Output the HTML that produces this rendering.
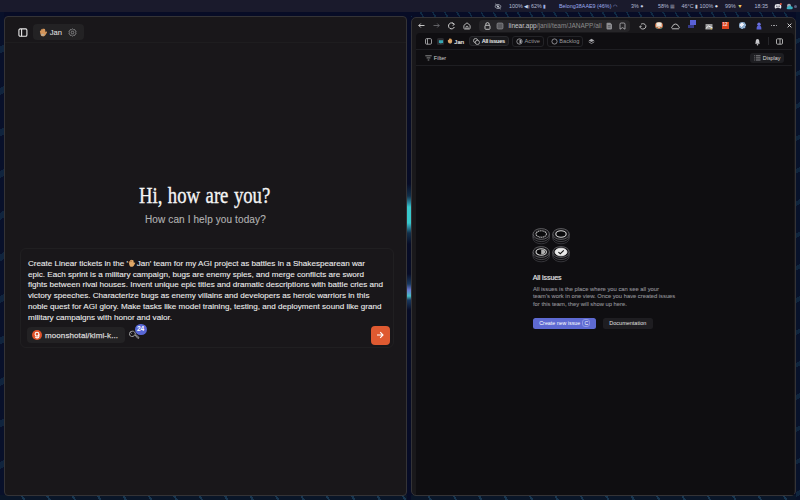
<!DOCTYPE html>
<html><head><meta charset="utf-8">
<style>
*{box-sizing:border-box;margin:0;padding:0}
html,body{width:800px;height:500px;overflow:hidden;background:#070c26;font-family:"Liberation Sans",sans-serif;position:relative}
.a{position:absolute}
.t{position:absolute;white-space:nowrap;line-height:1}
#topbar{left:0;top:0;width:800px;height:12px;background:#1a1a2c}
#winL{left:4px;top:16px;width:403px;height:480px;background:#19171a;border:1px solid #343336;border-radius:4px}
#winR{left:411px;top:17px;width:385px;height:479px;background:#19181b;border:1px solid #343336;border-radius:5px}
#app{left:416px;top:33px;width:378px;height:462px;background:#0f0e11;border-radius:4px 4px 0 0}
.sb{color:#b4bad6;font-size:5.4px}
</style></head>
<body>
<!-- WALLPAPER -->
<div class="a" style="left:400px;top:12px;width:400px;height:5px;background:repeating-linear-gradient(60deg,transparent 0 9px,#0f2a44 9px 10.5px)"></div>
<div class="a" style="left:0;top:12px;width:4px;height:488px;background:repeating-linear-gradient(150deg,#08102a 0 30px,#10243e 30px 36px)"></div>
<div class="a" style="left:0;top:495px;width:800px;height:5px;background:repeating-linear-gradient(60deg,#0a1628 0 20px,#183650 20px 22px)"></div>
<div class="a" style="left:407px;top:12px;width:4px;height:488px;background:linear-gradient(180deg,#070c26 0,#070c26 172px,#12304a 184px,#2a8aa0 191px,#38c8cc 195px,#38c8cc 211px,#2a8aa0 215px,#12304a 221px,#070c26 232px,#070c26 262px,#1a3a60 272px,#6a78d0 278px,#48c0c8 284px,#1a3a60 288px,#070c26 298px,#070c26 100%)"></div>
<div class="a" style="left:796px;top:12px;width:4px;height:488px;background:repeating-linear-gradient(150deg,#08122a 0 24px,#10263e 24px 28px)"></div>
<div class="a" id="topbar"></div>
<div class="a" id="winL"></div>
<div class="a" id="winR"></div>
<div class="a" id="app"></div>

<!-- TOPBAR -->
<svg class="a" style="left:494px;top:2.5px" width="8" height="7" viewBox="0 0 8 7"><path d="M0.8 3.5 Q4 -0.5 7.2 3.5 Q4 7.5 0.8 3.5Z" fill="none" stroke="#b8bcc8" stroke-width="0.8"/><circle cx="4" cy="3.5" r="1.1" fill="#b8bcc8"/><path d="M1.2 0.8 L6.8 6.2" stroke="#b8bcc8" stroke-width="0.8"/></svg>
<div class="t sb" style="left:509px;top:3.5px">100%<span style="color:#c8d4f0"> ◀ᴉ </span>62% <span style="color:#9fb0e0">▮</span></div>
<div class="t sb" style="left:559px;top:3.5px;color:#9cacee">Belong38AAE9 (46%) <span style="color:#9fb0e0">◠</span></div>
<div class="t sb" style="left:631px;top:3.5px">3% <span style="color:#c0c8e0">●</span></div>
<div class="t sb" style="left:658px;top:3.5px">58% <span style="color:#8a8ea0">▦</span></div>
<div class="t sb" style="left:681.5px;top:3.5px">46°C <span style="color:#c0c4d0">▮</span> 100% <span style="color:#e0e4f0">●</span></div>
<div class="t sb" style="left:725px;top:3.5px">99% <span style="color:#f0d060">▼</span></div>
<div class="t sb" style="left:754.5px;top:3.5px">18:35</div>
<svg class="a" style="left:774px;top:2.8px" width="8" height="6.5" viewBox="0 0 8 6.5"><path d="M1.3 1.5 C2.5 0.8 5.5 0.8 6.7 1.5 C7.5 3 7.5 4.5 7 5.3 C6 5.8 5.5 5.2 5.2 4.8 H2.8 C2.5 5.2 2 5.8 1 5.3 C0.5 4.5 0.5 3 1.3 1.5Z" fill="#e8e8ee"/><circle cx="2.9" cy="3.2" r="0.6" fill="#1b1a2c"/><circle cx="5.1" cy="3.2" r="0.6" fill="#1b1a2c"/><circle cx="6.9" cy="1.1" r="1" fill="#e85a3a"/></svg>
<svg class="a" style="left:785.5px;top:2.5px" width="7" height="7" viewBox="0 0 7 7"><circle cx="3" cy="2.8" r="2" fill="#a8a8b4"/><path d="M1.6 6.2 H5.6 A1.3 1.3 0 0 0 5.4 3.6 A1.9 1.9 0 0 0 1.9 4 A1.1 1.1 0 0 0 1.6 6.2Z" fill="#3ab0c0"/></svg>
<div class="a" style="left:794px;top:4.5px;width:3px;height:3px;border-radius:50%;background:#5a6080"></div>

<!-- LEFT WINDOW -->
<div class="a" style="left:5px;top:42px;width:401px;height:1px;background:#1e1d1f"></div>
<svg class="a" style="left:18px;top:27.5px" width="10" height="9" viewBox="0 0 10 9"><rect x="0.9" y="0.9" width="8" height="7.4" rx="1.3" fill="none" stroke="#e8e8e8" stroke-width="1.1"/><path d="M3.6 0.9 V8.3" stroke="#e8e8e8" stroke-width="1.1"/></svg>
<div class="a" style="left:33px;top:24px;width:50.5px;height:15.5px;background:#232224;border-radius:4px"></div>
<svg class="a" style="left:38.5px;top:27.8px" width="8.5" height="9" viewBox="0 0 8.5 9"><path d="M1.3 5.2 L0.9 3.2 C0.8 2.5 1.6 2.2 1.9 2.9 L2.3 1.4 C2.5 0.7 3.3 0.8 3.4 1.5 L3.7 0.8 C4 0.2 4.8 0.4 4.8 1.1 L5.2 0.9 C5.7 0.7 6.2 1.1 6.1 1.7 L6.6 4.2 L7.4 3.6 C7.9 3.3 8.3 3.9 8 4.4 L6.8 6.6 C6 8.2 4.6 8.6 3.3 8.3 C2 8 1.5 6.8 1.3 5.2Z" fill="#d4955a"/><path d="M2 6.4 C2.8 5.6 4.4 5.6 5.6 6.6 C5 8 3.4 8.4 2.4 7.6Z" fill="#b9ad98"/></svg>
<div class="t" style="left:49.7px;top:28.5px;font-size:7.6px;color:#dcdcdc;-webkit-text-stroke:0.1px #dcdcdc">Jan</div>
<svg class="a" style="left:68px;top:27.7px" width="9" height="9" viewBox="0 0 9 9"><path d="M4.5 0.9 L5.4 1.7 L6.6 1.5 L7 2.6 L8.1 3.3 L7.7 4.5 L8.1 5.7 L7 6.4 L6.6 7.5 L5.4 7.3 L4.5 8.1 L3.6 7.3 L2.4 7.5 L2 6.4 L0.9 5.7 L1.3 4.5 L0.9 3.3 L2 2.6 L2.4 1.5 L3.6 1.7Z" fill="none" stroke="#8a8a8c" stroke-width="0.9" stroke-linejoin="round"/><circle cx="4.5" cy="4.5" r="1.3" fill="none" stroke="#8a8a8c" stroke-width="0.9"/></svg>

<div class="t" id="h1" style="left:139.3px;top:183.6px;font-family:'Liberation Serif',serif;font-size:23.4px;word-spacing:1px;color:#f4f4f4;-webkit-text-stroke:0.35px #f4f4f4;transform:scaleX(0.8);transform-origin:0 0">Hi, how are you?</div>
<div class="t" id="h2" style="left:145px;top:215.1px;font-size:10px;letter-spacing:0.12px;color:#b2b2b2;-webkit-text-stroke:0.12px #b2b2b2">How can I help you today?</div>

<div class="a" style="left:19.5px;top:247.5px;width:374px;height:100px;border:1px solid #201f21;border-radius:6px"></div>
<div class="a" id="prompt" style="left:28px;top:258.8px;width:360px;font-size:8.1px;line-height:10.76px;color:#ececec;-webkit-text-stroke:0.1px #ececec">
<div style="white-space:nowrap">Create Linear tickets in the '<svg style="display:inline-block;vertical-align:-1.6px;margin:0 0.6px 0 0.4px" width="7.6" height="8.6" viewBox="0 0 8.5 9"><path d="M1.3 5.2 L0.9 3.2 C0.8 2.5 1.6 2.2 1.9 2.9 L2.3 1.4 C2.5 0.7 3.3 0.8 3.4 1.5 L3.7 0.8 C4 0.2 4.8 0.4 4.8 1.1 L5.2 0.9 C5.7 0.7 6.2 1.1 6.1 1.7 L6.6 4.2 L7.4 3.6 C7.9 3.3 8.3 3.9 8 4.4 L6.8 6.6 C6 8.2 4.6 8.6 3.3 8.3 C2 8 1.5 6.8 1.3 5.2Z" fill="#e0a868"/><path d="M1.2 4 C1.6 2.2 3.6 1.2 4.2 3" fill="none" stroke="#a86a3a" stroke-width="0.8"/></svg>Jan' team for my AGI project as battles in a Shakespearean war</div>
<div style="white-space:nowrap">epic. Each sprint is a military campaign, bugs are enemy spies, and merge conflicts are sword</div>
<div style="white-space:nowrap">fights between rival houses. Invent unique epic titles and dramatic descriptions with battle cries and</div>
<div style="white-space:nowrap">victory speeches. Characterize bugs as enemy villains and developers as heroic warriors in this</div>
<div style="white-space:nowrap">noble quest for AGI glory. Make tasks like model training, testing, and deployment sound like grand</div>
<div style="white-space:nowrap">military campaigns with honor and valor.</div>
</div>
<div class="a" style="left:27px;top:327.3px;width:97.5px;height:15.5px;background:#232224;border-radius:4px"></div>
<div class="a" style="left:31.6px;top:330.4px;width:10px;height:10px;background:#e0522a;border-radius:50%"></div><svg class="a" style="left:31.6px;top:330.4px" width="10" height="10" viewBox="0 0 10 10"><circle cx="5" cy="4.2" r="1.9" fill="none" stroke="#fff" stroke-width="1.1"/><path d="M6.9 4.2 V6.3 A1.9 1.9 0 0 1 3.3 6.8" fill="none" stroke="#fff" stroke-width="1.1"/></svg>
<div class="t" style="left:45px;top:332px;font-size:8px;letter-spacing:0.1px;color:#d4d4d4;-webkit-text-stroke:0.25px #d4d4d4">moonshotai/kimi-k...</div>
<svg class="a" style="left:129px;top:330px" width="11" height="11" viewBox="0 0 11 11"><path d="M3.4 1.2 A2.7 2.7 0 1 0 5.7 4.7 L8.9 8.4 A0.9 0.9 0 0 0 9.9 7.4 L6.3 4.1 A2.7 2.7 0 0 0 3.4 1.2Z M1.2 2.3 L2.6 3.6" fill="none" stroke="#a0a0a0" stroke-width="1"/></svg>
<div class="a" style="left:135.3px;top:323.8px;width:11.5px;height:11px;background:#5867d6;border-radius:50%"></div>
<div class="t" style="left:136.9px;top:326.3px;font-size:6.6px;font-weight:bold;color:#fff">24</div>
<div class="a" style="left:371px;top:326px;width:18.8px;height:18.8px;background:#df5a31;border-radius:4px"></div>
<svg class="a" style="left:375px;top:330px" width="10" height="10" viewBox="0 0 10 10"><path d="M2 5 H8 M5.2 2.2 L8 5 L5.2 7.8" fill="none" stroke="#fff" stroke-width="1.1"/></svg>

<!-- RIGHT WINDOW -->
<svg class="a" style="left:418px;top:23px" width="7" height="5" viewBox="0 0 7 5"><path d="M0.8 2.5 H6.5 M2.8 0.5 L0.8 2.5 L2.8 4.5" fill="none" stroke="#d8d8d8" stroke-width="0.9"/></svg>
<svg class="a" style="left:433px;top:23px" width="7" height="5" viewBox="0 0 7 5"><path d="M0.5 2.5 H6.2 M4.2 0.5 L6.2 2.5 L4.2 4.5" fill="none" stroke="#6a6a6e" stroke-width="0.9"/></svg>
<svg class="a" style="left:447px;top:22px" width="9" height="8" viewBox="0 0 9 8"><path d="M7 2.2 A3 3 0 1 0 7.3 5" fill="none" stroke="#d0d0d0" stroke-width="1"/><path d="M5.3 0.8 L7.5 2.3 L5.6 3.6" fill="none" stroke="#d0d0d0" stroke-width="0.9"/></svg>
<svg class="a" style="left:462.5px;top:22.3px" width="8" height="7.5" viewBox="0 0 8 7.5"><path d="M0.9 3.4 L4 0.8 L7.1 3.4 V6.3 A0.7 0.7 0 0 1 6.4 7 H1.6 A0.7 0.7 0 0 1 0.9 6.3Z" fill="none" stroke="#d0d0d0" stroke-width="0.85" stroke-linejoin="round"/><path d="M3 7 V5.2 A1 1 0 0 1 5 5.2 V7" fill="none" stroke="#d0d0d0" stroke-width="0.8"/></svg>
<div class="a" style="left:478.8px;top:19.6px;width:151.2px;height:12px;background:#262528;border-radius:4px"></div>
<svg class="a" style="left:484px;top:21.5px" width="7" height="8" viewBox="0 0 7 8"><path d="M1.8 3.3 V2.3 A1.7 1.7 0 0 1 5.2 2.3 V3.3" fill="none" stroke="#cfcfcf" stroke-width="0.9"/><rect x="1" y="3.3" width="5" height="4" rx="0.8" fill="none" stroke="#cfcfcf" stroke-width="0.9"/></svg>
<svg class="a" style="left:496px;top:21.5px" width="8" height="8" viewBox="0 0 8 8"><rect x="1" y="1" width="6" height="6" rx="1.2" fill="#5a5a5e" stroke="#9a9a9e" stroke-width="0.6"/></svg>
<div class="t" style="left:508.5px;top:22.5px;font-size:6.5px;color:#c8c8cc">linear.app<span style="color:#8a8a8a">/janii/team/JANAPP/all</span></div>
<svg class="a" style="left:605.5px;top:21.8px" width="7" height="8" viewBox="0 0 7 8"><path d="M1.3 0.8 H4.3 L6 2.5 V6.6 A0.8 0.8 0 0 1 5.2 7.4 H1.3 A0.8 0.8 0 0 1 0.5 6.6 V1.6 A0.8 0.8 0 0 1 1.3 0.8Z" fill="#8e8e92"/><path d="M1.8 3.6 H4.6 M1.8 5.2 H4.6" stroke="#3a3a3e" stroke-width="0.6"/></svg>
<svg class="a" style="left:618.5px;top:21.8px" width="7" height="8" viewBox="0 0 7 8"><path d="M1 7.2 V2.2 A1.2 1.2 0 0 1 2.2 1 H4.8 A1.2 1.2 0 0 1 6 2.2 V7.2 L3.5 5.6Z" fill="none" stroke="#a8a8ac" stroke-width="0.9"/></svg>

<!-- extension icons -->
<svg class="a" style="left:639px;top:22.5px" width="8" height="7" viewBox="0 0 8 7"><path d="M2 1.2 C3.5 0.2 6.2 0.6 6.8 2.6 C7.4 4.6 5.6 6.2 3.6 6 C1.6 5.8 0.6 4.4 1 3 M1 3 L2.6 3.4" fill="none" stroke="#c8c8c8" stroke-width="0.9"/></svg>
<div class="a" style="left:655px;top:22px;width:7.5px;height:7px;border-radius:50%;background:radial-gradient(circle at 50% 35%,#f0e8e0 0 30%,#d8c0a8 31% 55%,#c86840 56% 70%,#70a080 71%)"></div>
<svg class="a" style="left:670.5px;top:22.5px" width="9" height="7" viewBox="0 0 9 7"><path d="M1.5 5.8 H7.5 A1.4 1.4 0 0 0 7.3 3.2 A2.9 2.9 0 0 0 1.7 3.2 A1.4 1.4 0 0 0 1.5 5.8Z" fill="none" stroke="#cfcfcf" stroke-width="0.9"/></svg>
<div class="a" style="left:689.5px;top:20px;width:6.5px;height:4.8px;background:#5a62d8"></div>
<div class="a" style="left:688px;top:24.5px;width:6px;height:3.5px;background:#353a88"></div>
<svg class="a" style="left:705px;top:22.5px" width="8" height="7" viewBox="0 0 8 7"><rect x="0.5" y="1" width="7" height="5.5" rx="0.6" fill="#9a9a9c"/><path d="M0.8 5.5 L3.5 3 L7.5 4.8" stroke="#f4f4f4" stroke-width="1" fill="none"/><circle cx="6.2" cy="5.8" r="0.7" fill="#f0c040"/></svg>
<div class="a" style="left:722px;top:22px;width:6.5px;height:6.8px;background:#d8431f"></div>
<div class="t" style="left:722.6px;top:23.4px;font-size:4.6px;color:#f8d8d0;font-weight:bold;letter-spacing:-0.2px">12</div>
<div class="a" style="left:738.5px;top:22px;width:7.5px;height:7px;border-radius:50%;background:radial-gradient(circle at 40% 40%,#f0f0f8 0 30%,#90b0d0 31% 65%,#405070 66%)"></div>
<svg class="a" style="left:755.5px;top:21.5px" width="6" height="8" viewBox="0 0 6 8"><circle cx="3" cy="2.2" r="1.7" fill="#6a70e0"/><path d="M0.6 7.4 C0.4 4.5 1.5 3.6 3 3.6 C4.5 3.6 5.6 4.5 5.4 7.4Z" fill="#5b63d8"/></svg>
<div class="a" style="left:771px;top:24.8px;width:6px;height:0.9px;background:repeating-linear-gradient(90deg,#9a9a9e 0 1.2px,transparent 1.2px 2.4px)"></div>
<svg class="a" style="left:786.5px;top:23px" width="5" height="5" viewBox="0 0 5 5"><path d="M0.6 0.6 L4.4 4.4 M4.4 0.6 L0.6 4.4" stroke="#e6e6e6" stroke-width="0.9"/></svg>

<div class="a" style="left:416px;top:49px;width:376px;height:1px;background:#1e1e22"></div>
<div class="a" style="left:416px;top:65px;width:376px;height:1px;background:#1e1e22"></div>

<svg class="a" style="left:424.8px;top:38.4px" width="7" height="7" viewBox="0 0 7 7"><rect x="0.5" y="0.6" width="6" height="5.6" rx="1.2" fill="none" stroke="#b0b0b2" stroke-width="0.85"/><path d="M2.5 0.6 V6.2" stroke="#b0b0b2" stroke-width="0.85"/></svg>
<div class="a" style="left:436.5px;top:37.5px;width:7.5px;height:7.5px;background:#2a2a2e;border-radius:1.5px"></div>
<svg class="a" style="left:437.5px;top:38.5px" width="6" height="6" viewBox="0 0 6 6"><path d="M0.9 1.2 H5.1 V4 H3.6 L2.6 5 V4 H0.9Z" fill="#36a8b4"/></svg>
<svg class="a" style="left:447.3px;top:38.3px" width="6" height="6" viewBox="0 0 8 8"><path d="M1.2 4.5 C0.8 3 1.5 1.8 2.5 2.5 L2.8 1.2 C3.2 0.5 4 0.6 4.2 1.3 L4.6 0.8 C5.2 0.4 5.9 0.8 5.8 1.6 L6.6 2.2 C7.3 3 7 5.5 6 6.6 C5 7.6 2.8 7.6 1.8 6.3Z" fill="#dba060"/><path d="M3 5.2 C3.8 4.6 5 4.8 5.6 5.6" fill="none" stroke="#c8b89a" stroke-width="1.2"/></svg>
<div class="t" style="left:454.3px;top:38.6px;font-size:6px;letter-spacing:0.1px;color:#e0e0e0;-webkit-text-stroke:0.2px #e0e0e0">Jan</div>

<div class="a" style="left:469px;top:36px;width:39.5px;height:10px;background:#19191c;border:0.8px solid #28282c;border-radius:3px"></div>
<svg class="a" style="left:472.5px;top:38px" width="7" height="7" viewBox="0 0 7 7"><circle cx="2.6" cy="2.6" r="2.1" fill="none" stroke="#c8c8c8" stroke-width="0.8"/><circle cx="4.4" cy="4.4" r="2.1" fill="#19191c" stroke="#c8c8c8" stroke-width="0.8"/></svg>
<div class="t" style="left:481.7px;top:39.1px;font-size:5.6px;letter-spacing:-0.3px;color:#e8e8e8;font-weight:bold">All issues</div>
<div class="a" style="left:512px;top:36px;width:31.5px;height:10.5px;border:0.8px solid #232327;border-radius:3px"></div>
<svg class="a" style="left:515.5px;top:38px" width="7" height="7" viewBox="0 0 7 7"><circle cx="3.5" cy="3.5" r="2.7" fill="none" stroke="#a8a8ac" stroke-width="0.8"/><path d="M3.5 1.5 A2 2 0 0 1 3.5 5.5Z" fill="#a8a8ac"/></svg>
<div class="t" style="left:524.6px;top:39.1px;font-size:5.65px;color:#98989c">Active</div>
<div class="a" style="left:547px;top:36px;width:35.5px;height:10.5px;border:0.8px solid #232327;border-radius:3px"></div>
<svg class="a" style="left:550.5px;top:38px" width="7" height="7" viewBox="0 0 7 7"><circle cx="3.5" cy="3.5" r="2.6" fill="none" stroke="#a8a8ac" stroke-width="0.8"/></svg>
<div class="t" style="left:559.3px;top:39.1px;font-size:5.65px;color:#98989c">Backlog</div>
<svg class="a" style="left:587.5px;top:38px" width="7" height="7" viewBox="0 0 7 7"><path d="M3.5 0.8 L6.3 2.4 L3.5 4 L0.7 2.4Z" fill="#a8a8ac"/><path d="M0.7 3.8 L3.5 5.5 L6.3 3.8" fill="none" stroke="#a8a8ac" stroke-width="0.8"/></svg>

<svg class="a" style="left:753.5px;top:37.5px" width="7" height="8" viewBox="0 0 7 8"><path d="M1 5.8 C1.8 5 1.6 3.5 1.8 2.7 A1.7 1.7 0 0 1 5.2 2.7 C5.4 3.5 5.2 5 6 5.8Z" fill="#c8c8cc"/><circle cx="3.5" cy="6.8" r="0.8" fill="#c8c8cc"/></svg>
<div class="a" style="left:767.5px;top:37px;width:0.8px;height:8px;background:#26262a"></div>
<svg class="a" style="left:775.5px;top:38px" width="7" height="7" viewBox="0 0 7 7"><rect x="0.5" y="0.8" width="6" height="5.4" rx="1" fill="none" stroke="#bdbdbd" stroke-width="0.9"/><path d="M4 0.8 V6.2" stroke="#bdbdbd" stroke-width="0.9"/></svg>

<svg class="a" style="left:424.5px;top:54.8px" width="7" height="6" viewBox="0 0 7 6"><path d="M0.3 0.8 H6.7 M1.6 2.9 H5.4 M2.7 5 H4.3" stroke="#bdbdbd" stroke-width="0.7"/></svg>
<div class="t" style="left:433.8px;top:55.6px;font-size:5.6px;color:#d0d0d0">Filter</div>
<div class="a" style="left:750px;top:52.5px;width:34px;height:10px;background:#1e1e22;border-radius:3px"></div>
<svg class="a" style="left:753.8px;top:54.8px" width="7" height="6" viewBox="0 0 7 6"><path d="M2 0.8 H6.5 M2 2.9 H6.5 M2 5 H6.5 M0.3 0.8 H1.2 M0.3 2.9 H1.2 M0.3 5 H1.2" stroke="#b8b8bc" stroke-width="0.7"/></svg>
<div class="t" style="left:762.8px;top:55.5px;font-size:5.4px;color:#d8d8d8">Display</div>

<!-- illustration -->
<svg class="a" style="left:528px;top:222px" width="48" height="44" viewBox="0 0 48 44"><g stroke-width="0.8"><path d="M5.0 12.0 A8.2 5.4 0 0 0 21.4 12.0 V16.4 A8.2 5.4 0 0 1 5.0 16.4Z" fill="#0f0e11" stroke="none"/><path d="M5.0 16.4 A8.2 5.4 0 0 0 21.4 16.4" stroke="#3e3e42" fill="none"/><path d="M5.0 14.2 A8.2 5.4 0 0 0 21.4 14.2" stroke="#4e4e52" fill="none"/><path d="M5.0 12.0 V16.4 M21.4 12.0 V16.4" stroke="#4a4a4e" fill="none"/><ellipse cx="13.2" cy="12.0" rx="8.2" ry="5.4" stroke="#6e6e72" fill="#161518"/><ellipse cx="13.2" cy="12.0" rx="5.2" ry="3.2" stroke="#b8b8b8" stroke-width="1.1" stroke-dasharray="1.3 0.5" fill="#0a0a0c"/><path d="M24.8 12.0 A8.2 5.4 0 0 0 41.2 12.0 V16.4 A8.2 5.4 0 0 1 24.8 16.4Z" fill="#0f0e11" stroke="none"/><path d="M24.8 16.4 A8.2 5.4 0 0 0 41.2 16.4" stroke="#3e3e42" fill="none"/><path d="M24.8 14.2 A8.2 5.4 0 0 0 41.2 14.2" stroke="#4e4e52" fill="none"/><path d="M24.8 12.0 V16.4 M41.2 12.0 V16.4" stroke="#4a4a4e" fill="none"/><ellipse cx="33.0" cy="12.0" rx="8.2" ry="5.4" stroke="#6e6e72" fill="#161518"/><ellipse cx="33.0" cy="12.0" rx="5.2" ry="3.2" stroke="#d8d8d8" stroke-width="1.1" fill="#0a0a0c"/><path d="M5.0 30.0 A8.2 5.4 0 0 0 21.4 30.0 V34.4 A8.2 5.4 0 0 1 5.0 34.4Z" fill="#0f0e11" stroke="none"/><path d="M5.0 34.4 A8.2 5.4 0 0 0 21.4 34.4" stroke="#3e3e42" fill="none"/><path d="M5.0 32.2 A8.2 5.4 0 0 0 21.4 32.2" stroke="#4e4e52" fill="none"/><path d="M5.0 30.0 V34.4 M21.4 30.0 V34.4" stroke="#4a4a4e" fill="none"/><ellipse cx="13.2" cy="30.0" rx="8.2" ry="5.4" stroke="#6e6e72" fill="#161518"/><ellipse cx="13.2" cy="30.0" rx="5.2" ry="3.2" stroke="#d0d0d0" stroke-width="1.1" fill="#0a0a0c"/><path d="M13.2 27.6 A4 2.4 0 0 1 13.2 32.4Z" fill="#b0b0b0"/><path d="M24.8 30.0 A8.2 5.4 0 0 0 41.2 30.0 V34.4 A8.2 5.4 0 0 1 24.8 34.4Z" fill="#0f0e11" stroke="none"/><path d="M24.8 34.4 A8.2 5.4 0 0 0 41.2 34.4" stroke="#3e3e42" fill="none"/><path d="M24.8 32.2 A8.2 5.4 0 0 0 41.2 32.2" stroke="#4e4e52" fill="none"/><path d="M24.8 30.0 V34.4 M41.2 30.0 V34.4" stroke="#4a4a4e" fill="none"/><ellipse cx="33.0" cy="30.0" rx="8.2" ry="5.4" stroke="#6e6e72" fill="#161518"/><ellipse cx="33.0" cy="30.0" rx="6" ry="3.8" stroke="#eeeeee" stroke-width="0.8" fill="#eaeaea"/><path d="M30.4 30.1 L32.3 31.7 L35.8 28.4" stroke="#141414" stroke-width="1.1" fill="none"/></g></svg>

<div class="t" style="left:532.8px;top:274px;font-size:7px;letter-spacing:-0.1px;-webkit-text-stroke:0.18px #e4e4e6;color:#e4e4e6">All issues</div>
<div class="a" style="left:533px;top:285.5px;font-size:5.8px;line-height:7.55px;color:#909096;-webkit-text-stroke:0.1px #909096;white-space:nowrap">All issues is the place where you can see all your<br>team's work in one view. Once you have created issues<br>for this team, they will show up here.</div>
<div class="a" style="left:533px;top:317.5px;width:63px;height:11.6px;background:#5e6ad2;border-radius:2.5px"></div>
<div class="t" style="left:539.3px;top:321px;font-size:5.3px;color:#fff">Create new issue</div>
<div class="a" style="left:582.2px;top:319.4px;width:8px;height:8px;border:0.7px solid #8e97e6;border-radius:3px"></div>
<div class="t" style="left:584.4px;top:321.4px;font-size:5.2px;color:#fff">C</div>
<div class="a" style="left:603px;top:317.5px;width:49.5px;height:11.6px;background:#1e1d21;border-radius:2.5px"></div>
<div class="t" style="left:609.3px;top:321px;font-size:5.5px;color:#e0e0e0">Documentation</div>

</body></html>
